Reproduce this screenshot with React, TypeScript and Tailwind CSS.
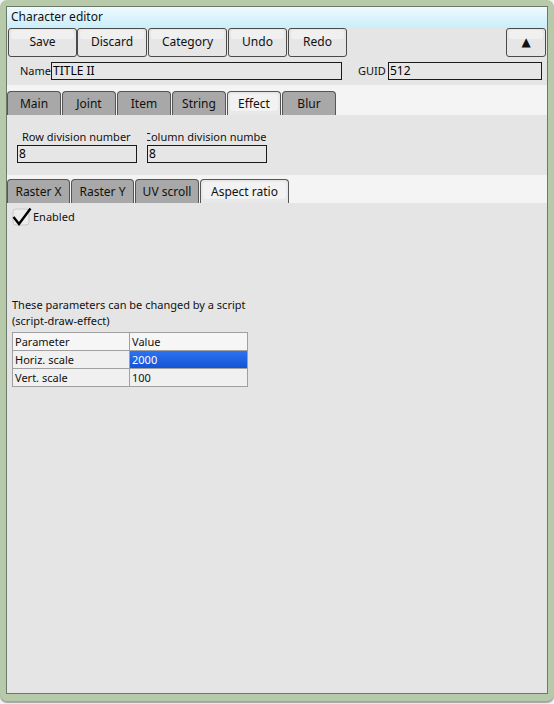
import React from "react";

const font = { fontFamily: '"Noto Sans", "DejaVu Sans", sans-serif' };

const ToolButton: React.FC<{ label: string; w: string }> = ({ label, w }) => (
  <div
    className={`${w} h-[29px] shrink-0 rounded-[3px] border border-[#4a4a4a] bg-[#e6e6e6] flex items-center justify-center relative text-[12px] text-[#111]`}
  >
    <div className="absolute left-[2px] right-[2px] top-[1px] h-[9px] rounded-[3px] bg-[#f0f0f0]" />
    <span className="relative">{label}</span>
  </div>
);

const Tab: React.FC<{ label: string; w: string; active?: boolean }> = ({
  label,
  w,
  active,
}) => (
  <div
    className={`${w} h-[24px] shrink-0 rounded-t-[4px] border border-b-0 border-[#555] flex items-center justify-center text-[12px] text-[#111] relative ${
      active ? "bg-[#e8e8e8]" : "bg-[#a8a8a8]"
    }`}
  >
    {active && (
      <div className="absolute left-[2px] right-[2px] top-[2px] h-[17px] rounded-[3px] bg-[#f2f2f2]" />
    )}
    <span className="relative">{label}</span>
  </div>
);

const Field: React.FC<{ value: string; w: string }> = ({ value, w }) => (
  <div
    className={`${w} h-[18px] shrink-0 border border-[#1a1a1a] bg-[#e6e6e6] text-[12px] leading-[16px] pl-[1px] text-[#000]`}
  >
    {value}
  </div>
);

export default function App() {
  return (
    <div className="w-[554px] h-[704px] bg-[#f2f2f2]" style={font}>
      <div className="w-[554px] h-[701px] rounded-[7px] bg-[#b6caa9] px-[6px] pt-[6px] pb-[7px] shadow-[0_2px_1px_#a4a4a4]">
        <div className="h-full flex flex-col border border-[#6d786b] bg-[#e5e5e5]">
          {/* title bar */}
          <div className="h-[20px] bg-gradient-to-b from-[#effafd] to-[#cbeefb] text-[12px] leading-[20px] pl-[4px] text-[#111]">
            Character editor
          </div>

          {/* toolbar */}
          <div className="h-[30px] flex items-center pl-[1px] pr-[1px]">
            <ToolButton label="Save" w="w-[69px]" />
            <div className="w-[69px] ml-[0px]">
              <ToolButton label="Discard" w="w-[70px]" />
            </div>
            <div className="ml-[2px]">
              <ToolButton label="Category" w="w-[79px]" />
            </div>
            <div className="ml-[1px]">
              <ToolButton label="Undo" w="w-[59px]" />
            </div>
            <div className="ml-[1px]">
              <ToolButton label="Redo" w="w-[59px]" />
            </div>
            <div className="flex-1" />
            <ToolButton label="▲" w="w-[40px]" />
          </div>

          {/* name row */}
          <div className="h-[28px] flex items-center text-[11px] text-[#111]">
            <span className="ml-[13px] w-[31px]">Name</span>
            <Field value="TITLE II" w="w-[291px]" />
            <span className="ml-[16px] w-[30px]">GUID</span>
            <Field value="512" w="w-[154px]" />
          </div>

          {/* main tabs */}
          <div className="h-[30px] bg-[#f4f4f4] flex items-end gap-[1px]">
            <Tab label="Main" w="w-[54px]" />
            <Tab label="Joint" w="w-[54px]" />
            <Tab label="Item" w="w-[54px]" />
            <Tab label="String" w="w-[54px]" />
            <Tab label="Effect" w="w-[54px]" active />
            <Tab label="Blur" w="w-[54px]" />
          </div>

          {/* division fields */}
          <div className="h-[60px] flex pl-[10px] pt-[14px] gap-[10px] text-[11px] text-[#111]">
            <div className="flex flex-col">
              <span className="pl-[5px] leading-[16px]">Row division number</span>
              <Field value="8" w="w-[120px]" />
            </div>
            <div className="flex flex-col w-[121px] overflow-hidden">
              <span className="leading-[16px] whitespace-nowrap ml-[-3px]">Column division numbe</span>
              <Field value="8" w="w-[120px]" />
            </div>
          </div>

          {/* sub tabs */}
          <div className="h-[28px] bg-[#f4f4f4] flex items-end gap-[1px]">
            <Tab label="Raster X" w="w-[63px]" />
            <Tab label="Raster Y" w="w-[63px]" />
            <Tab label="UV scroll" w="w-[64px]" />
            <Tab label="Aspect ratio" w="w-[89px]" active />
          </div>

          {/* effect content */}
          <div className="flex-1 pl-[5px] pt-[4px] text-[11px] text-[#111]">
            <div className="flex items-center h-[20px]">
              <svg width="20" height="20" viewBox="0 0 20 20" className="shrink-0">
                <rect x="1" y="2" width="16" height="16" rx="3" fill="#ececec" stroke="#c8c8c8" />
                <path d="M1.5 10 L7 17 L18.5 1.5" fill="none" stroke="#000" strokeWidth="2.4" />
              </svg>
              <span className="ml-[1px]">Enabled</span>
            </div>

            <div className="mt-[70px] leading-[16px]">
              <div>These parameters can be changed by a script</div>
              <div>(script-draw-effect)</div>
            </div>

            <div className="mt-[3px] w-[236px] border border-[#a0a0a0] leading-[17px]">
              <div className="flex bg-[#f6f6f6]">
                <div className="w-[117px] pl-[2px] border-r border-[#a0a0a0]">Parameter</div>
                <div className="flex-1 pl-[2px]">Value</div>
              </div>
              <div className="flex border-t border-[#a0a0a0] bg-[#f0f0f0]">
                <div className="w-[117px] pl-[2px] border-r border-[#a0a0a0]">Horiz. scale</div>
                <div className="flex-1 pl-[2px] bg-gradient-to-b from-[#2c73f2] to-[#1453d6] text-white">2000</div>
              </div>
              <div className="flex border-t border-[#a0a0a0] bg-[#f0f0f0]">
                <div className="w-[117px] pl-[2px] border-r border-[#a0a0a0]">Vert. scale</div>
                <div className="flex-1 pl-[2px]">100</div>
              </div>
            </div>
          </div>
        </div>
      </div>
    </div>
  );
}
